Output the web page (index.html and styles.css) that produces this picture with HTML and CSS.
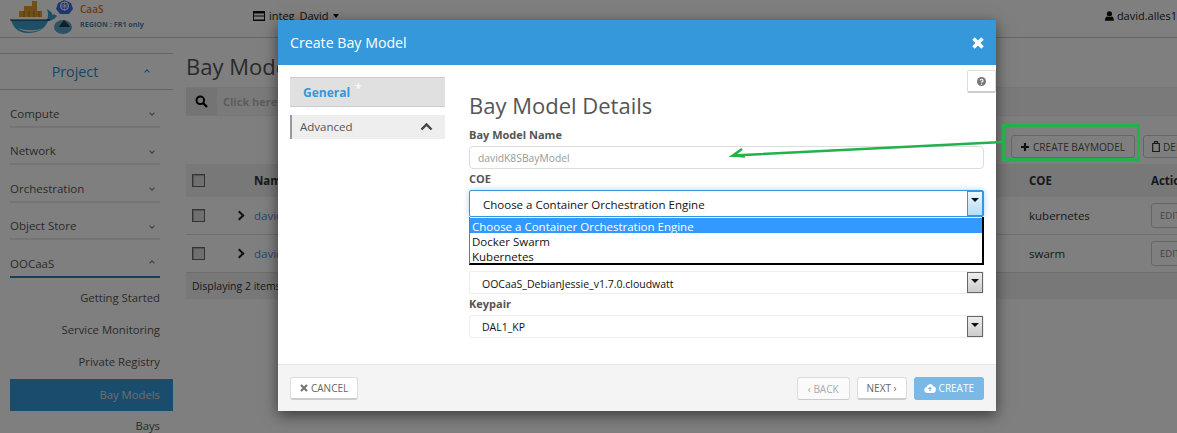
FILE: index.html
```html
<!DOCTYPE html>
<html lang="en">
<head>
    <meta charset="UTF-8">
    <title>Create Bay Model</title>
    <link rel="stylesheet" href="styles.css">
</head>
<body>
    <header class="topbar">
        <svg class="logo" width="80" height="37" viewBox="0 0 80 37">
            <!-- containers -->
            <rect x="19" y="11" width="23" height="6" fill="#e0a030"/>
            <rect x="24" y="6" width="8" height="5" fill="#e0a030"/>
            <rect x="32" y="1" width="5" height="10" fill="#e0a030"/>
            <path d="M24 11v6M29 11v6M34 11v6M39 11v6" stroke="#a87515" stroke-width="1"/>
            <!-- whale -->
            <path d="M11 20 H46 C49 19 48 12 47 9 C50 11 53 13 52 15 C54 14 56 15 57 16 C54 20 50 21 48 21 C45 29 38 33 28 33 C18 33 13 27 11 20Z" fill="#3aa0c8"/>
            <path d="M18 28 C24 33 36 33 42 28 C36 31 26 31 18 28Z" fill="#eee"/>
            <path d="M10 20 H50" stroke="#123" stroke-width="1"/>
            <!-- wheel -->
            <polygon points="64,0 71,3 73,9 69,14 60,14 56,9 58,3" fill="#3f6fe0"/>
            <circle cx="64.500" cy="6" r="4" fill="none" stroke="#fff" stroke-width="1"/>
            <path d="M64.500 1v10M60 6h9M61 3l7 6M68 3l-7 6" stroke="#fff" stroke-width="0.600"/>
            <!-- swarm -->
            <ellipse cx="63" cy="27" rx="9" ry="7" fill="#5aa5cc"/>
            <path d="M60 25l4-5 4 4 2 3H59Z" fill="#1d3f55"/>
        </svg>
        <div class="brand">
            <span class="brand-name">CaaS</span>
            <span class="brand-region">REGION : FR1 only</span>
        </div>
        <div class="project-switch">
            <svg class="ico" width="12" height="12" viewBox="0 0 12 12"><path d="M0 1h12v10H0ZM1 3.500v2h10v-2ZM1 6.500v3h10v-3Z" fill="#111" fill-rule="evenodd"/></svg>
            <span>integ_David</span>
            <i class="caret-down"></i>
        </div>
        <div class="user-menu">
            <svg class="ico" width="11" height="12" viewBox="0 0 11 12"><path d="M5.500 0a3 3 0 0 1 0 6.500a3 3 0 0 1 0-6.500ZM0 12c0-4 1-5.500 3-5.500c1.500 1 3.500 1 5 0c2 0 3 1.500 3 5.500Z" fill="#111"/></svg>
            <span>david.alles1</span>
        </div>
    </header>

    <div class="layout">
        <nav class="sidebar">
            <div class="side-title"><span>Project</span><i class="chev up blue"></i></div>
            <div class="side-group"><span>Compute</span><i class="chev"></i></div>
            <div class="side-group"><span>Network</span><i class="chev"></i></div>
            <div class="side-group"><span>Orchestration</span><i class="chev"></i></div>
            <div class="side-group"><span>Object Store</span><i class="chev"></i></div>
            <div class="side-group open"><span>OOCaaS</span><i class="chev up"></i></div>
            <a class="side-link">Getting Started</a>
            <a class="side-link">Service Monitoring</a>
            <a class="side-link">Private Registry</a>
            <a class="side-link active">Bay Models</a>
            <a class="side-link">Bays</a>
        </nav>

        <main class="content">
            <h1>Bay Models</h1>
            <div class="search-bar">
                <span class="search-addon">
                    <svg width="13" height="13" viewBox="0 0 13 13"><circle cx="5.300" cy="5.300" r="3.800" fill="none" stroke="#000" stroke-width="2"/><path d="M8 8l4 4" stroke="#000" stroke-width="2.400"/></svg>
                </span>
                <span class="search-input">Click here for filters.</span>
            </div>
            <div class="action-row">
                <span class="btn-page">
                    <svg width="10" height="10" viewBox="0 0 10 10"><path d="M5 1v8M1 5h8" stroke="#222" stroke-width="2.200"/></svg>
                    CREATE BAYMODEL
                </span>
                <span class="btn-page">
                    <svg width="8" height="11" viewBox="0 0 8 11"><path d="M2.500 2V.7h3V2M.7 2.500h6.600V10.500H.7Z" fill="none" stroke="#333" stroke-width="1.200"/></svg>
                    DELETE BAYMODELS
                </span>
            </div>
            <div class="table">
                <div class="row head">
                    <span class="cell-check"><i class="check"></i></span>
                    <span class="cell-arrow"></span>
                    <span class="cell-name">Name</span>
                    <span class="cell-coe">COE</span>
                    <span class="cell-act">Actions</span>
                </div>
                <div class="row">
                    <span class="cell-check"><i class="check"></i></span>
                    <span class="cell-arrow"><i class="chev-right"></i></span>
                    <span class="cell-name link">davidK8SBayModel</span>
                    <span class="cell-coe">kubernetes</span>
                    <span class="cell-act"><span class="btn-edit">EDIT</span></span>
                </div>
                <div class="row">
                    <span class="cell-check"><i class="check"></i></span>
                    <span class="cell-arrow"><i class="chev-right"></i></span>
                    <span class="cell-name link">davidSwarmBayModel</span>
                    <span class="cell-coe">swarm</span>
                    <span class="cell-act"><span class="btn-edit">EDIT</span></span>
                </div>
                <div class="row foot">Displaying 2 items</div>
            </div>
        </main>
    </div>

    <div class="backdrop"></div>

    <section class="modal">
        <div class="modal-head">
            <span>Create Bay Model</span>
            <svg width="14" height="14" viewBox="0 0 14 14"><path d="M2.500 2.500l9 9M11.500 2.500l-9 9" stroke="#fff" stroke-width="3.600"/></svg>
        </div>
        <div class="modal-body">
            <div class="wizard-nav">
                <div class="step current">General<span class="star">*</span></div>
                <div class="step">
                    <span>Advanced</span>
                    <svg width="13" height="9" viewBox="0 0 13 9"><path d="M1.500 7.500l5-5 5 5" fill="none" stroke="#444" stroke-width="2.400"/></svg>
                </div>
            </div>
            <div class="wizard-form">
                <h2>Bay Model Details</h2>
                <label class="field-label name-label">Bay Model Name</label>
                <div class="text-input">davidK8SBayModel</div>
                <label class="field-label">COE</label>
                <div class="select focused">
                    <span>Choose a Container Orchestration Engine</span>
                    <i class="select-btn"></i>
                    <ul class="dropdown">
                        <li class="selected">Choose a Container Orchestration Engine</li>
                        <li>Docker Swarm</li>
                        <li>Kubernetes</li>
                    </ul>
                </div>
                <div class="select small image-select">
                    <span>OOCaaS_DebianJessie_v1.7.0.cloudwatt</span>
                    <i class="select-btn"></i>
                </div>
                <label class="field-label">Keypair</label>
                <div class="select small">
                    <span>DAL1_KP</span>
                    <i class="select-btn"></i>
                </div>
            </div>
            <span class="help-btn">
                <svg width="9" height="9" viewBox="0 0 9 9"><circle cx="4.500" cy="4.500" r="4.500" fill="#777"/><path d="M3 3.500a1.500 1.400 0 1 1 1.500 1.500v.6" fill="none" stroke="#fff" stroke-width="1.100"/><rect x="4" y="6.600" width="1.100" height="1.100" fill="#fff"/></svg>
            </span>
        </div>
        <div class="modal-foot">
            <span class="btn">
                <svg width="8" height="8" viewBox="0 0 8 8"><path d="M1 1l6 6M7 1l-6 6" stroke="#777" stroke-width="2.200"/></svg>
                CANCEL
            </span>
            <span class="foot-right">
                <span class="btn disabled">&lsaquo; BACK</span>
                <span class="btn">NEXT &rsaquo;</span>
                <span class="btn primary">
                    <svg width="12" height="10" viewBox="0 0 12 10"><path d="M3 10a3 3 0 0 1-.5-5.900a3.500 3.500 0 0 1 6.700-.8a3.400 3.400 0 0 1-.2 6.700Z" fill="#fff"/><path d="M6 8V4.500M4.500 6L6 4.300L7.500 6" fill="none" stroke="#7ab8e6" stroke-width="1.100"/></svg>
                    CREATE
                </span>
            </span>
        </div>
    </section>

    <svg class="annotation" width="1177" height="433" viewBox="0 0 1177 433">
        <rect x="1003.500" y="125.500" width="135" height="34" fill="none" stroke="#22b14c" stroke-width="3"/>
        <path d="M1003 142L733 155.500L742 149M733 155.500L745 156.500" fill="none" stroke="#22b14c" stroke-width="2.600"/>
    </svg>
</body>
</html>
```

FILE: styles.css
```css
* {
    box-sizing: border-box;
}
html, body {
    margin: 0;
    height: 433px;
    overflow: hidden;
}
body {
    font-family: "Open Sans", "DejaVu Sans", sans-serif;
    font-size: 12px;
    color: #333;
    background-color: #fff;
}

/* top bar */
.topbar {
    height: 38px;
    border-bottom: 1px solid #ccc;
    display: flex;
    align-items: center;
}
.logo {
    flex: none;
    align-self: flex-start;
}
.brand {
    width: 173px;
    flex: none;
    align-self: flex-start;
    margin-top: 2px;
    display: flex;
    flex-direction: column;
}
.brand-name {
    color: #e0742a;
    font-size: 10px;
    font-weight: 600;
    line-height: 14px;
}
.brand-region {
    color: #4a86a8;
    font-size: 7.200px;
    font-weight: 700;
    line-height: 16px;
}
.project-switch {
    display: flex;
    align-items: center;
    gap: 4px;
    color: #222;
    font-size: 11px;
    padding-bottom: 6px;
}
.user-menu {
    margin-left: auto;
    width: 72px;
    display: flex;
    align-items: center;
    gap: 3px;
    white-space: nowrap;
    overflow: hidden;
    font-size: 11px;
    color: #222;
    padding-bottom: 6px;
}
.caret-down {
    border: 3.500px solid transparent;
    border-top: 4px solid #111;
    border-bottom: 0;
}

.layout {
    display: flex;
}

/* sidebar */
.sidebar {
    width: 173px;
    flex: none;
    padding-top: 15px;
}
.side-title {
    height: 37px;
    border-top: 1px solid #ccc;
    border-bottom: 1px solid #ccc;
    padding-right: 23px;
    display: flex;
    align-items: center;
    justify-content: center;
    position: relative;
    color: #2f8ccc;
    font-size: 14.300px;
}
.side-title .chev {
    position: absolute;
    right: 24px;
}
.side-group {
    height: 37.500px;
    margin: 0 13px 0 10px;
    border-bottom: 2px solid #e8e8e8;
    padding: 11px 6px 0 0;
    display: flex;
    justify-content: space-between;
    align-items: center;
    font-size: 11.500px;
    color: #555;
}
.side-group.open {
    border-bottom-color: #2c7fb8;
}
.chev {
    width: 4px;
    height: 4px;
    border-right: 1px solid #777;
    border-bottom: 1px solid #777;
    transform: rotate(45deg);
}
.chev.up {
    transform: rotate(225deg);
}
.chev.blue {
    border-color: #2f8ccc;
}
.side-link {
    display: block;
    height: 32px;
    line-height: 30px;
    margin-left: 10px;
    padding-right: 13px;
    text-align: right;
    font-size: 11.300px;
    color: #555;
}
.side-group.open + .side-link {
    margin-top: 5px;
}
.side-link.active {
    line-height: 32px;
    background-color: #3498db;
    color: #ddd;
}

/* page content */
.content {
    margin-left: 13px;
    width: 1100px;
    flex: none;
}
h1 {
    margin: 15px 0 8px;
    font-size: 22px;
    font-weight: 400;
    line-height: 26px;
    color: #555;
}
.search-bar {
    height: 29px;
    display: flex;
    background-color: #f5f5f5;
    border-top: 1px solid #eee;
    border-bottom: 1px solid #eee;
}
.search-addon {
    width: 31px;
    background-color: #e8e8e8;
    display: flex;
    align-items: center;
    justify-content: center;
}
.search-input {
    padding-left: 6px;
    line-height: 27px;
    font-size: 11px;
    font-weight: 700;
    color: #bbb;
}
.action-row {
    height: 48px;
    padding: 19px 0 0 825px;
    display: flex;
    gap: 8px;
}
.btn-page {
    height: 23px;
    padding: 0 9px 0 8px;
    border: 1px solid #ccc;
    border-radius: 3px;
    display: flex;
    align-items: center;
    gap: 3px;
    font-size: 10.100px;
    color: #555;
    white-space: nowrap;
}
.row {
    display: flex;
    align-items: center;
    height: 38px;
    font-size: 11.500px;
    border-bottom: 1px solid #ddd;
}
.row.head {
    height: 33px;
    background-color: #f0f0f0;
    font-weight: 700;
    border-bottom: 0;
}
.row.foot {
    height: 26px;
    padding-left: 6px;
    background-color: #f0f0f0;
    border-bottom: 0;
    font-size: 10.500px;
}
.cell-check {
    width: 50px;
    padding-left: 6px;
    display: flex;
}
.cell-arrow {
    width: 18px;
}
.cell-name {
    width: 775px;
}
.cell-name.link {
    color: #3498db;
}
.cell-coe {
    width: 122px;
}
.check {
    width: 13px;
    height: 13px;
    border: 1px solid #666;
    background-color: #e0e0e0;
    box-shadow: inset 1px 1px 1px #aaa;
}
.chev-right {
    display: block;
    width: 7px;
    height: 7px;
    border-right: 2px solid #222;
    border-top: 2px solid #222;
    transform: rotate(45deg);
}
.btn-edit {
    display: block;
    width: 50px;
    height: 25px;
    border: 1px solid #ccc;
    border-radius: 3px;
    padding-left: 8px;
    line-height: 23px;
    font-size: 9.500px;
    color: #888;
}

.backdrop {
    position: absolute;
    inset: 0;
    background-color: rgba(0, 0, 0, 0.5);
}

/* modal */
.modal {
    position: absolute;
    left: 278px;
    top: 20px;
    width: 718px;
    height: 391px;
    background-color: #fff;
    box-shadow: 0 4px 14px rgba(0, 0, 0, 0.55);
    display: flex;
    flex-direction: column;
}
.modal-head {
    height: 45px;
    flex: none;
    background-color: #3498db;
    color: #fff;
    font-size: 14.200px;
    padding: 0 11px 0 12px;
    display: flex;
    align-items: center;
    justify-content: space-between;
}
.modal-body {
    flex: 1;
    display: flex;
    position: relative;
    padding: 12px 12px 0;
}
.wizard-nav {
    width: 155px;
    flex: none;
}
.step {
    height: 24px;
    margin-bottom: 8px;
    background-color: #eee;
    border-left: 2px solid #999;
    padding: 0 12px 2px 8px;
    display: flex;
    align-items: center;
    justify-content: space-between;
    font-size: 11.500px;
    color: #555;
}
.step.current {
    display: block;
    position: relative;
    height: 30px;
    line-height: 30px;
    background-color: #e0e0e0;
    border: 0;
    border-top: 1px solid #ccc;
    border-bottom: 1px solid #ccc;
    padding: 0 0 0 13px;
    font-size: 12px;
    font-weight: 700;
    color: #3498db;
}
.star {
    position: absolute;
    left: 65px;
    top: 6px;
    line-height: 10px;
    color: #fff;
    font-weight: 400;
}
.wizard-form {
    margin-left: 24px;
    width: 515px;
    flex: none;
}
h2 {
    margin: 15px 0 0;
    font-size: 22px;
    font-weight: 400;
    line-height: 27px;
    color: #555;
}
.field-label {
    display: block;
    margin-top: 2px;
    height: 15px;
    line-height: 15px;
    font-size: 11px;
    font-weight: 700;
    color: #555;
}
.field-label.name-label {
    margin-top: 8px;
}
.text-input {
    height: 23px;
    margin-top: 4px;
    border: 1px solid #ddd;
    border-radius: 4px;
    padding-left: 8px;
    line-height: 23px;
    font-size: 10.300px;
    color: #999;
}
.select {
    position: relative;
    height: 27px;
    margin-top: 4px;
    padding-left: 13px;
    line-height: 27px;
    font-size: 11.500px;
    color: #111;
    border: 1px solid #ddd;
    border-radius: 2px;
}
.select.focused {
    border-color: #3498db;
    box-shadow: 0 0 6px rgba(52, 152, 219, 0.4);
}
.select.small {
    height: 23px;
    padding-left: 12px;
    line-height: 23px;
    font-size: 10.500px;
    border-color: #eee;
}
.select.image-select {
    margin-top: 54px;
    line-height: 24px;
}
.select-btn {
    position: absolute;
    right: 0;
    top: 0;
    bottom: 0;
    width: 16px;
    border: 1px solid #666;
    background: linear-gradient(#eee, #ccc);
}
.select.focused .select-btn {
    border-color: #3498db;
    background: linear-gradient(#eef7fd, #b5dcf6);
}
.select-btn::after {
    content: "";
    position: absolute;
    left: 3px;
    top: 6px;
    border: 4px solid transparent;
    border-top: 4px solid #111;
    border-bottom: 0;
}
.dropdown {
    position: absolute;
    left: -1px;
    right: -1px;
    top: 26px;
    margin: 0;
    padding: 1px 0 0;
    list-style: none;
    background-color: #fff;
    border-right: 2px solid #000;
    border-bottom: 2px solid #000;
    border-left: 1px solid #777;
    z-index: 2;
}
.dropdown li {
    height: 15px;
    line-height: 17px;
    padding-left: 2px;
    font-size: 11.500px;
}
.dropdown li.selected {
    background-color: #3399ff;
    color: #fff;
}
.help-btn {
    position: absolute;
    right: 0;
    top: 5px;
    width: 29px;
    height: 23px;
    background-color: #fff;
    border: 1px solid #ddd;
    border-bottom: 2px solid #ccc;
    border-radius: 2px;
    display: flex;
    align-items: center;
    justify-content: center;
}
.modal-foot {
    height: 47px;
    flex: none;
    background-color: #f4f4f4;
    border-top: 1px solid #e5e5e5;
    padding: 12px 12px 0;
    display: flex;
    justify-content: space-between;
}
.foot-right {
    display: flex;
    gap: 7px;
}
.btn {
    height: 23px;
    padding: 0 9px;
    background-color: #fff;
    border: 1px solid #ddd;
    border-bottom: 2px solid #ccc;
    border-radius: 3px;
    display: flex;
    align-items: center;
    gap: 3px;
    font-size: 10px;
    color: #666;
}
.btn.disabled {
    padding: 0 10px;
    color: #aaa;
    background-color: #fafafa;
    border-bottom-width: 1px;
}
.btn.primary {
    background-color: #7ab8e6;
    border-color: #7ab8e6;
    color: #fff;
}
.annotation {
    position: absolute;
    left: 0;
    top: 0;
    pointer-events: none;
}
```
